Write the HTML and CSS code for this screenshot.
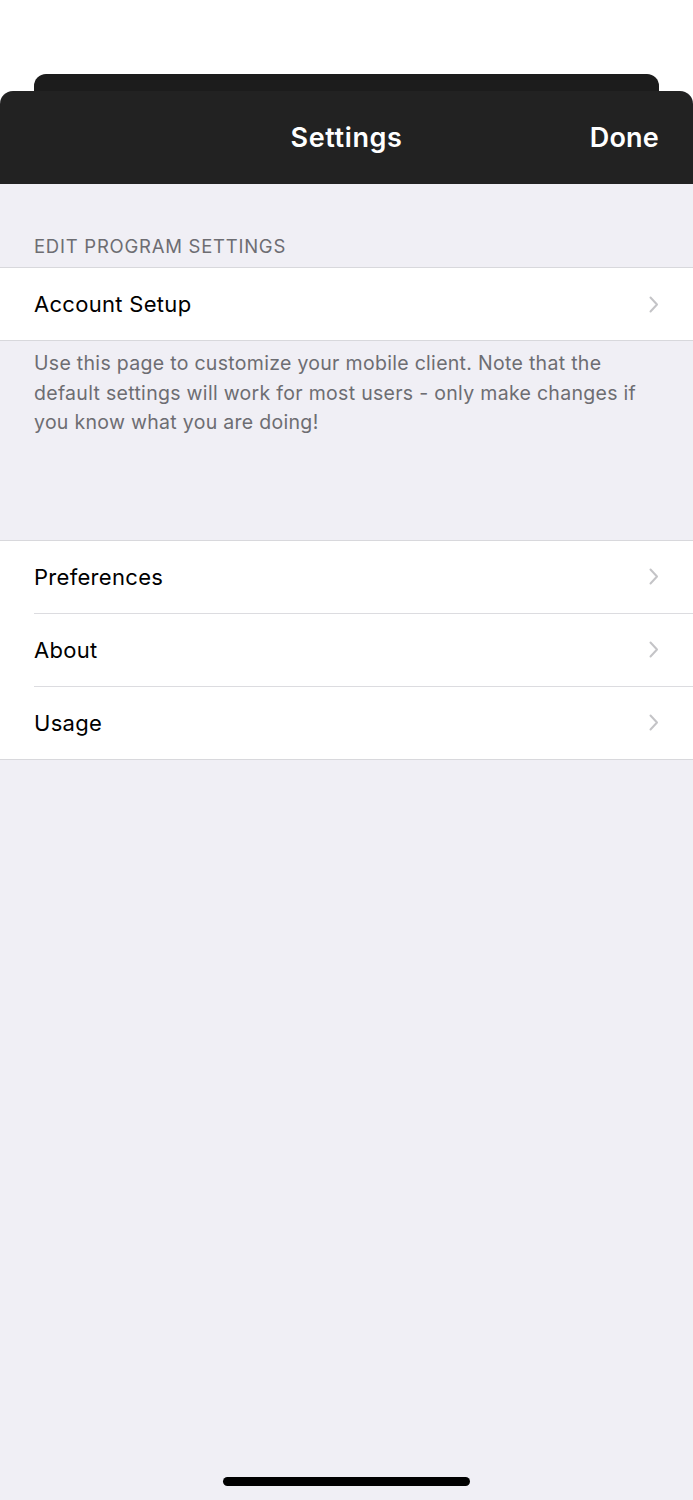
FILE: index.html
```html
<!DOCTYPE html>
<html>
<head>
<meta charset="utf-8">
<title>Settings</title>
<link rel="stylesheet" href="styles.css">
</head>
<body>
<div class="screen">
  <!-- stacked sheet behind the modal -->
  <div class="back-card"></div>

  <div class="sheet">
    <header class="nav-bar">
      <span class="nav-spacer"></span>
      <h1 class="nav-title">Settings</h1>
      <span class="nav-done">Done</span>
    </header>

    <div class="content">
      <div class="section-header">EDIT PROGRAM SETTINGS</div>
      <ul class="group">
        <li class="cell">
          <span class="cell-label">Account Setup</span>
          <svg class="chevron" width="10" height="17" viewBox="0 0 10 17"><path d="M1.5 1.5 L8 8.5 L1.5 15.5" fill="none" stroke="#c4c4c7" stroke-width="2" stroke-linecap="round" stroke-linejoin="round"/></svg>
        </li>
      </ul>
      <p class="section-footer">Use this page to customize your mobile client. Note that the default settings will work for most users - only make changes if you know what you are doing!</p>

      <ul class="group group-spaced">
        <li class="cell">
          <span class="cell-label">Preferences</span>
          <svg class="chevron" width="10" height="17" viewBox="0 0 10 17"><path d="M1.5 1.5 L8 8.5 L1.5 15.5" fill="none" stroke="#c4c4c7" stroke-width="2" stroke-linecap="round" stroke-linejoin="round"/></svg>
        </li>
        <li class="cell">
          <span class="cell-label">About</span>
          <svg class="chevron" width="10" height="17" viewBox="0 0 10 17"><path d="M1.5 1.5 L8 8.5 L1.5 15.5" fill="none" stroke="#c4c4c7" stroke-width="2" stroke-linecap="round" stroke-linejoin="round"/></svg>
        </li>
        <li class="cell">
          <span class="cell-label">Usage</span>
          <svg class="chevron" width="10" height="17" viewBox="0 0 10 17"><path d="M1.5 1.5 L8 8.5 L1.5 15.5" fill="none" stroke="#c4c4c7" stroke-width="2" stroke-linecap="round" stroke-linejoin="round"/></svg>
        </li>
      </ul>

      <div class="home-indicator"></div>
    </div>
  </div>
</div>
</body>
</html>
```

FILE: styles.css
```css
* {
  box-sizing: border-box;
}

body {
  margin: 0;
  background: #ffffff;
  font-family: Inter, "Noto Sans", sans-serif;
}

.screen {
  display: flex;
  flex-direction: column;
  min-height: 1500px;
  padding-top: 74px;
}

/* card peeking out behind the sheet */
.back-card {
  height: 24px;
  margin: 0 34px -7px;
  background: #1c1c1c;
  border-radius: 12px 12px 0 0;
}

.sheet {
  flex: 1;
  display: flex;
  flex-direction: column;
  border-radius: 13px 13px 0 0;
  overflow: hidden;
  background: #f0eff5;
  position: relative;
}

/* Nav bar */
.nav-bar {
  height: 93px;
  background: #222222;
  display: flex;
  align-items: center;
  padding: 0 34px;
}

.nav-spacer {
  flex: 1;
}

.nav-title {
  margin: 0;
  color: #fff;
  font-size: 27px;
  font-weight: 600;
  letter-spacing: 0.6px;
}

.nav-done {
  flex: 1;
  text-align: right;
  color: #fff;
  font-size: 27px;
  font-weight: 600;
  letter-spacing: 0.2px;
}

/* Content */
.content {
  flex: 1;
  display: flex;
  flex-direction: column;
}

.section-header {
  padding: 51px 34px 10px;
  font-size: 18.5px;
  color: #6d6d72;
  line-height: 22px;
  letter-spacing: 0.75px;
}

.group {
  list-style: none;
  margin: 0;
  padding: 0;
  background: #fff;
  border-top: 1px solid #d8d8dc;
  border-bottom: 1px solid #d8d8dc;
}

.group-spaced {
  margin-top: 101px;
}

.cell {
  height: 73px;
  display: flex;
  align-items: center;
  justify-content: space-between;
  margin-left: 34px;
  padding-right: 34px;
  border-top: 1px solid #dcdce0;
}

.cell:first-child {
  border-top: none;
  height: 72px;
}

.cell-label {
  font-size: 22px;
  color: #000;
  letter-spacing: 0.3px;
}

.chevron {
  display: block;
}

.section-footer {
  margin: 0;
  padding: 8px 34px 1px;
  font-size: 19.5px;
  line-height: 29.5px;
  color: #6d6d72;
  letter-spacing: 0.3px;
}

.home-indicator {
  margin: auto auto 14px;
  width: 247px;
  height: 9px;
  border-radius: 5px;
  background: #000;
}
```
